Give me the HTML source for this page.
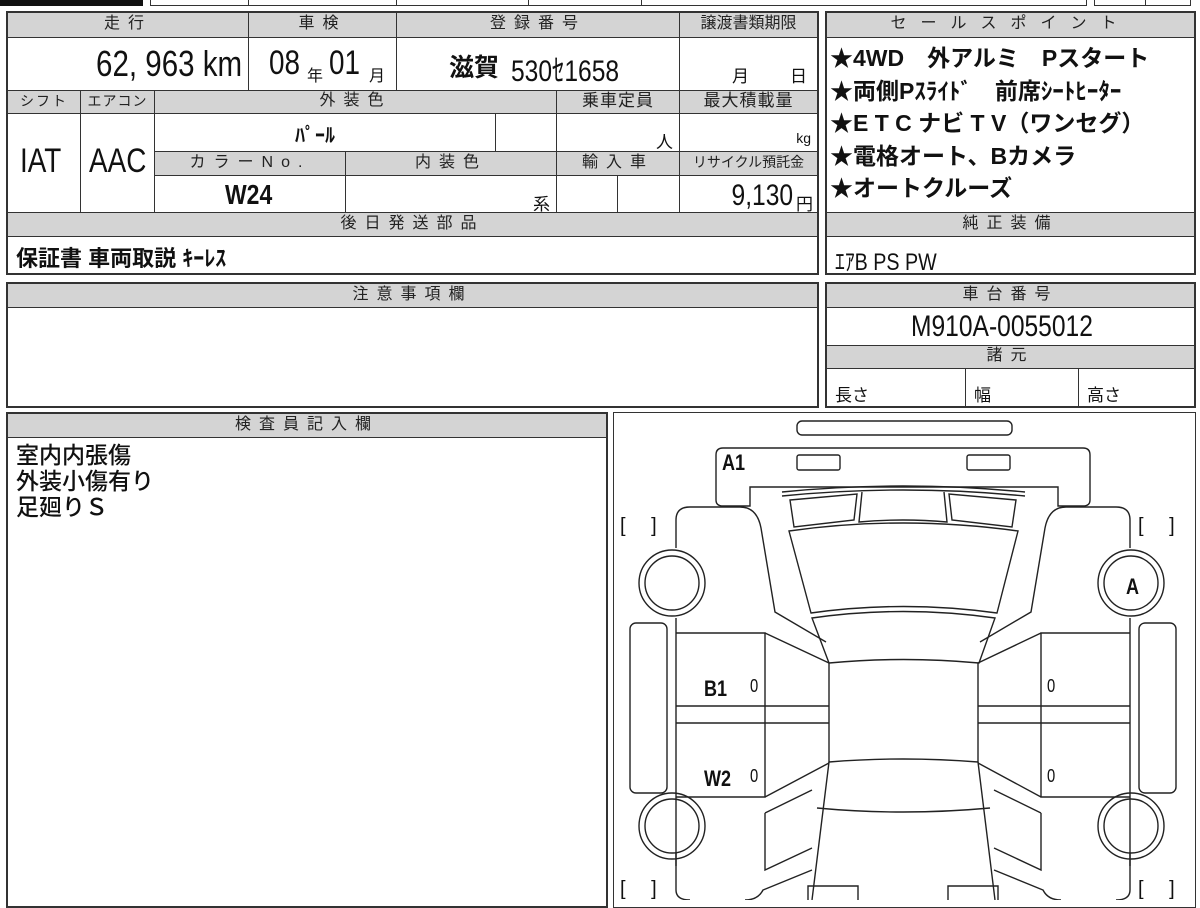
<!DOCTYPE html>
<html><head><meta charset="utf-8"><style>
*{margin:0;padding:0;box-sizing:border-box}
body{width:1200px;height:900px;background:#fff;position:relative;overflow:hidden;font-family:"Liberation Sans","Noto Sans CJK JP",sans-serif;color:#111}
.c{position:absolute;border:1px solid #333;background:#fff;overflow:hidden;white-space:nowrap}
.h{background:#d4d4d4;text-align:center;font-size:16px;letter-spacing:8px;line-height:22px;color:#222}
.b{position:absolute;border:2px solid #333}
.v{position:absolute;white-space:nowrap}
.n{display:inline-block;transform:scaleX(.82);transform-origin:left center}
</style></head><body>
<div style="position:absolute;left:0;top:0;width:143px;height:6px;background:#111"></div>
<div class="c" style="left:150px;top:-2px;width:99px;height:8px"></div>
<div class="c" style="left:248px;top:-2px;width:149px;height:8px"></div>
<div class="c" style="left:396px;top:-2px;width:133px;height:8px"></div>
<div class="c" style="left:528px;top:-2px;width:114px;height:8px"></div>
<div class="c" style="left:641px;top:-2px;width:446px;height:8px"></div>
<div class="c" style="left:1094px;top:-2px;width:52px;height:8px"></div>
<div class="c" style="left:1145px;top:-2px;width:46px;height:8px"></div>

<div class="c h" style="left:7px;top:12px;width:242px;height:26px">走行</div>
<div class="c h" style="left:248px;top:12px;width:149px;height:26px">車検</div>
<div class="c h" style="left:396px;top:12px;width:284px;height:26px">登録番号</div>
<div class="c h" style="left:679px;top:12px;width:139px;height:26px;letter-spacing:0">譲渡書類期限</div>
<div class="c" style="left:7px;top:37px;width:242px;height:54px"><span class="v" style="right:6px;top:5px;font-size:36px"><span class="n" style="transform-origin:right center">62, 963 km</span></span></div>
<div class="c" style="left:248px;top:37px;width:149px;height:54px"><span class="v" style="left:20px;top:6px;font-size:34px"><span class="n">08</span></span><span class="v" style="left:58px;top:24px;font-size:16px">年</span><span class="v" style="left:80px;top:6px;font-size:34px"><span class="n">01</span></span><span class="v" style="left:120px;top:24px;font-size:16px">月</span></div>
<div class="c" style="left:396px;top:37px;width:284px;height:54px"><span class="v" style="left:52px;top:10px;font-size:25px;font-weight:bold">滋賀</span><span class="v" style="left:114px;top:8px;font-size:30px"><span class="n">530ｾ1658</span></span></div>
<div class="c" style="left:679px;top:37px;width:139px;height:54px"><span class="v" style="left:52px;top:24px;font-size:17px">月</span><span class="v" style="left:110px;top:24px;font-size:17px">日</span></div>

<div class="c h" style="left:7px;top:90px;width:74px;height:24px;letter-spacing:2px;font-size:14px;line-height:20px">シフト</div>
<div class="c h" style="left:80px;top:90px;width:75px;height:24px;letter-spacing:1px;font-size:14px;line-height:20px">エアコン</div>
<div class="c h" style="left:154px;top:90px;width:403px;height:24px;line-height:20px">外装色</div>
<div class="c h" style="left:556px;top:90px;width:124px;height:24px;letter-spacing:1px;font-size:17px;line-height:20px">乗車定員</div>
<div class="c h" style="left:679px;top:90px;width:139px;height:24px;letter-spacing:1px;font-size:17px;line-height:20px">最大積載量</div>
<div class="c" style="left:7px;top:113px;width:74px;height:100px"><span class="v" style="left:12px;top:28px;font-size:34px"><span class="n">IAT</span></span></div>
<div class="c" style="left:80px;top:113px;width:75px;height:100px"><span class="v" style="left:8px;top:28px;font-size:34px"><span class="n">AAC</span></span></div>
<div class="c" style="left:154px;top:113px;width:342px;height:39px"><span class="v" style="left:140px;top:5px;font-size:20px;font-weight:bold">ﾊﾟｰﾙ</span></div>
<div class="c" style="left:495px;top:113px;width:62px;height:39px"></div>
<div class="c" style="left:556px;top:113px;width:124px;height:39px"><span class="v" style="right:6px;top:14px;font-size:17px">人</span></div>
<div class="c" style="left:679px;top:113px;width:139px;height:39px"><span class="v" style="right:6px;top:16px;font-size:14px">kg</span></div>
<div class="c h" style="left:154px;top:151px;width:192px;height:25px;line-height:21px">カラーNo.</div>
<div class="c h" style="left:345px;top:151px;width:212px;height:25px;line-height:21px">内装色</div>
<div class="c h" style="left:556px;top:151px;width:124px;height:25px;line-height:21px">輸入車</div>
<div class="c h" style="left:679px;top:151px;width:139px;height:25px;letter-spacing:0;font-size:14px;line-height:21px">リサイクル預託金</div>
<div class="c" style="left:154px;top:175px;width:192px;height:38px"><span class="v" style="left:70px;top:3px;font-size:28px;font-weight:bold"><span class="n">W24</span></span></div>
<div class="c" style="left:345px;top:175px;width:212px;height:38px"><span class="v" style="right:6px;top:14px;font-size:17px">系</span></div>
<div class="c" style="left:556px;top:175px;width:62px;height:38px"></div>
<div class="c" style="left:617px;top:175px;width:63px;height:38px"></div>
<div class="c" style="left:679px;top:175px;width:139px;height:38px"><span class="v" style="right:24px;top:3px;font-size:30px"><span class="n" style="transform-origin:right center">9,130</span></span><span class="v" style="right:4px;top:14px;font-size:17px">円</span></div>
<div class="c h" style="left:7px;top:212px;width:811px;height:25px;line-height:21px">後日発送部品</div>
<div class="c" style="left:7px;top:236px;width:811px;height:38px"><span class="v" style="left:8px;top:4px;font-size:22px;font-weight:bold">保証書 車両取説 ｷｰﾚｽ</span></div>
<div class="b" style="left:6px;top:11px;width:813px;height:264px"></div>

<div class="c h" style="left:826px;top:12px;width:369px;height:26px;letter-spacing:14px">セールスポイント</div>
<div class="c" style="left:826px;top:37px;width:369px;height:176px;font-size:23px;font-weight:bold;line-height:32.5px;padding:4px 0 0 3px">
★4WD　外アルミ　Pスタート<br>★両側Pｽﾗｲﾄﾞ　前席ｼｰﾄﾋｰﾀｰ<br>★E T C  ナビ  T V（ワンセグ）<br>★電格オート、Bカメラ<br>★オートクルーズ</div>
<div class="c h" style="left:826px;top:212px;width:369px;height:25px;line-height:21px">純正装備</div>
<div class="c" style="left:826px;top:236px;width:369px;height:38px"><span class="v" style="left:8px;top:5px;font-size:24px"><span class="n">ｴｱB PS PW</span></span></div>
<div class="b" style="left:825px;top:11px;width:371px;height:264px"></div>

<div class="c h" style="left:7px;top:283px;width:811px;height:25px;line-height:21px">注意事項欄</div>
<div class="c" style="left:7px;top:307px;width:811px;height:100px"></div>
<div class="b" style="left:6px;top:282px;width:813px;height:126px"></div>

<div class="c h" style="left:826px;top:283px;width:369px;height:25px;line-height:21px">車台番号</div>
<div class="c" style="left:826px;top:307px;width:369px;height:39px"><span class="v" style="left:84px;top:2px;font-size:30px"><span class="n">M910A-0055012</span></span></div>
<div class="c h" style="left:826px;top:345px;width:369px;height:24px;line-height:20px">諸元</div>
<div class="c" style="left:826px;top:368px;width:140px;height:39px"><span class="v" style="left:8px;top:12px;font-size:17px">長さ</span></div>
<div class="c" style="left:965px;top:368px;width:114px;height:39px"><span class="v" style="left:8px;top:12px;font-size:17px">幅</span></div>
<div class="c" style="left:1078px;top:368px;width:117px;height:39px"><span class="v" style="left:8px;top:12px;font-size:17px">高さ</span></div>
<div class="b" style="left:825px;top:282px;width:371px;height:126px"></div>

<div class="c h" style="left:7px;top:413px;width:600px;height:25px;line-height:21px">検査員記入欄</div>
<div class="c" style="left:7px;top:437px;width:600px;height:470px;font-size:23px;line-height:26px;padding:4px 0 0 8px;font-weight:500">室内内張傷<br>外装小傷有り<br>足廻りＳ</div>
<div class="b" style="left:6px;top:412px;width:602px;height:496px"></div>

<div class="b" style="left:613px;top:412px;width:583px;height:496px;border-width:1px"></div>
<svg style="position:absolute;left:0;top:0" width="1200" height="900" viewBox="0 0 1200 900" fill="none" stroke="#222" stroke-width="1.4">
<rect x="797" y="421" width="215" height="14" rx="5"/>
<path d="M716,455 Q716,448 723,448 L1083,448 Q1090,448 1090,455 L1090,500 Q1090,506 1083,506 L1058,506 L1058,487 L750,487 L750,506 L723,506 Q716,506 716,500 Z"/>
<rect x="797" y="455" width="43" height="15" rx="2"/>
<rect x="967" y="455" width="43" height="15" rx="2"/>
<path d="M782,492 Q903,480 1025,492"/>
<path d="M782,496 Q903,484 1025,496"/>
<path d="M790,500 L857,494 L854,520 L794,527 Z"/>
<path d="M1016,500 L949,494 L952,520 L1012,527 Z"/>
<path d="M862,492 L859,522 Q903,518 947,522 L944,492"/>
<path d="M789,531 Q903,515 1018,531 L997,613 Q903,600 811,613 Z"/>
<path d="M812,618 Q903,605 995,618 L979,663 Q903,656 829,663 Z"/>
<path d="M829,663 L829,762 Q903,756 978,762 L978,663"/>
<path d="M829,762 L812,900 M978,762 L995,900 M817,808 Q903,816 990,808"/>
<path d="M676,548 L676,520 Q676,507 690,507 L740,507 Q757,507 761,528 L775,612 L826,642"/>
<path d="M676,618 L676,866 M676,633 L765,633 L765,797 L676,797 M676,706 L829,706 M676,723 L829,723 M765,633 L829,663 M765,797 L829,763"/>
<path d="M765,813 L765,870 L812,848 M765,813 L812,790"/>
<path d="M676,852 L676,890 Q676,900 690,900 M745,900 Q758,900 763,890 L812,870"/>
<rect x="630" y="623" width="37" height="170" rx="6"/>
<circle cx="672" cy="583" r="33"/><circle cx="672" cy="583" r="27"/>
<circle cx="672" cy="826" r="33"/><circle cx="672" cy="826" r="27"/>
<path d="M1130,548 L1130,520 Q1130,507 1116,507 L1066,507 Q1049,507 1045,528 L1031,612 L980,642"/>
<path d="M1130,618 L1130,866 M1130,633 L1041,633 L1041,797 L1130,797 M1130,706 L978,706 M1130,723 L978,723 M1041,633 L978,663 M1041,797 L978,763"/>
<path d="M1041,813 L1041,870 L994,848 M1041,813 L994,790"/>
<path d="M1130,852 L1130,890 Q1130,900 1116,900 M1061,900 Q1048,900 1043,890 L994,870"/>
<rect x="1139" y="623" width="37" height="170" rx="6"/>
<circle cx="1131" cy="583" r="33"/><circle cx="1131" cy="583" r="27"/>
<circle cx="1131" cy="826" r="33"/><circle cx="1131" cy="826" r="27"/>
<path d="M808,900 L808,886 L858,886 L858,900 M948,900 L948,886 L998,886 L998,900"/>
</svg>
<div class="v" style="left:620px;top:509px;font-size:20px">[　 ]</div>
<div class="v" style="left:1138px;top:509px;font-size:20px">[　 ]</div>
<div class="v" style="left:620px;top:872px;font-size:20px">[　 ]</div>
<div class="v" style="left:1138px;top:872px;font-size:20px">[　 ]</div>
<div class="v" style="left:722px;top:450px;font-size:22px;font-weight:bold"><span class="n">A1</span></div>
<div class="v" style="left:1126px;top:574px;font-size:22px;font-weight:bold"><span class="n">A</span></div>
<div class="v" style="left:704px;top:676px;font-size:22px;font-weight:bold"><span class="n">B1</span></div>
<div class="v" style="left:750px;top:676px;font-size:18px"><span class="n">0</span></div>
<div class="v" style="left:1047px;top:676px;font-size:18px"><span class="n">0</span></div>
<div class="v" style="left:704px;top:766px;font-size:22px;font-weight:bold"><span class="n">W2</span></div>
<div class="v" style="left:750px;top:766px;font-size:18px"><span class="n">0</span></div>
<div class="v" style="left:1047px;top:766px;font-size:18px"><span class="n">0</span></div>
</body></html>
